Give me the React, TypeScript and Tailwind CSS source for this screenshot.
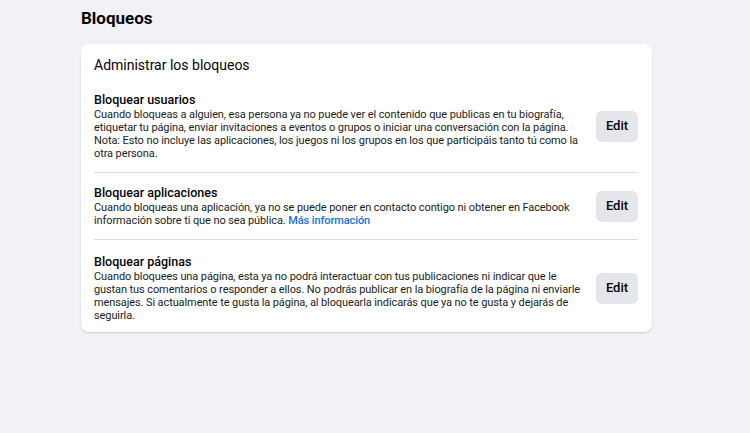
const sections = [
  {
    title: "Bloquear usuarios",
    lines: [
      "Cuando bloqueas a alguien, esa persona ya no puede ver el contenido que publicas en tu biografía,",
      "etiquetar tu página, enviar invitaciones a eventos o grupos o iniciar una conversación con la página.",
      "Nota: Esto no incluye las aplicaciones, los juegos ni los grupos en los que participáis tanto tú como la",
      "otra persona.",
    ],
  },
  {
    title: "Bloquear aplicaciones",
    lines: [
      "Cuando bloqueas una aplicación, ya no se puede poner en contacto contigo ni obtener en Facebook",
      "información sobre ti que no sea pública.",
    ],
    link: "Más información",
  },
  {
    title: "Bloquear páginas",
    lines: [
      "Cuando bloquees una página, esta ya no podrá interactuar con tus publicaciones ni indicar que le",
      "gustan tus comentarios o responder a ellos. No podrás publicar en la biografía de la página ni enviarle",
      "mensajes. Si actualmente te gusta la página, al bloquearla indicarás que ya no te gusta y dejarás de",
      "seguirla.",
    ],
  },
];

export default function App() {
  return (
    <div className="min-h-[433px] bg-[#f0f2f5] font-['Roboto',sans-serif] text-[#050505]">
      <div className="ml-[81px] w-[571px] pt-[7px]">
        <h1 className="text-[17px] font-bold leading-[22px]">Bloqueos</h1>

        <div className="mt-[15px] rounded-lg bg-white pl-[13px] pr-[14px] pt-[11px] shadow-[0_1px_2px_rgba(0,0,0,0.15)]">
          <h2 className="text-[14px] leading-[20px]">Administrar los bloqueos</h2>

          <div className="mt-[5px]">
            {sections.map((s, i) => (
              <div
                key={s.title}
                className={`flex items-center justify-between py-[12px] ${
                  i > 0 ? "border-t border-[#dadde1]" : ""
                } ${i === 2 ? "pt-[14px] pb-[10px]" : ""}`}
              >
                <div className="min-w-0">
                  <div className="text-[12.5px] font-medium leading-[16px]">{s.title}</div>
                  <div className="text-[11px] leading-[13px] tracking-[-0.1px] text-[#1c1e21]">
                    {s.lines.map((l, j) => (
                      <div key={j} className="whitespace-nowrap">
                        {l}
                        {s.link && j === s.lines.length - 1 && (
                          <span className="font-medium text-[#216fdb]"> {s.link}</span>
                        )}
                      </div>
                    ))}
                  </div>
                </div>
                <button className="h-[31px] w-[42px] shrink-0 rounded-md bg-[#e4e6eb] text-[13px] font-medium">
                  Edit
                </button>
              </div>
            ))}
          </div>
        </div>
      </div>
    </div>
  );
}
